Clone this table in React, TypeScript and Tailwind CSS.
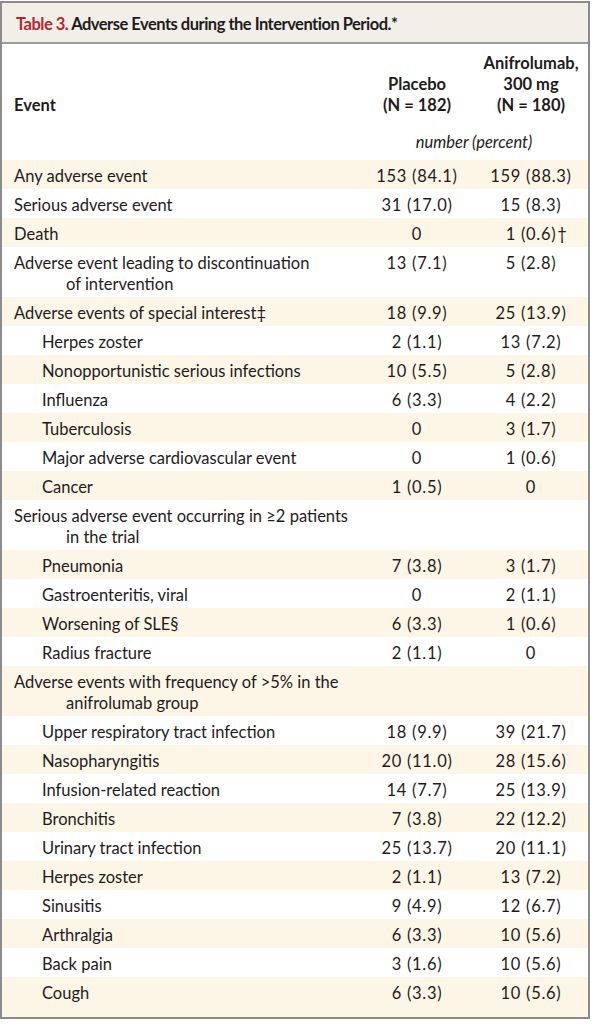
import React from 'react';

type Row = {
  label: string[];
  a?: string;
  b?: string;
  sub?: boolean;
  markA?: string;
  markB?: string;
};

const rows: Row[] = [
  { label: ['Any adverse event'], a: '153 (84.1)', b: '159 (88.3)' },
  { label: ['Serious adverse event'], a: '31 (17.0)', b: '15 (8.3)' },
  { label: ['Death'], a: '0', b: '1 (0.6)', markB: '†' },
  { label: ['Adverse event leading to discontinuation', 'of intervention'], a: '13 (7.1)', b: '5 (2.8)' },
  { label: ['Adverse events of special interest‡'], a: '18 (9.9)', b: '25 (13.9)' },
  { label: ['Herpes zoster'], a: '2 (1.1)', b: '13 (7.2)', sub: true },
  { label: ['Nonopportunistic serious infections'], a: '10 (5.5)', b: '5 (2.8)', sub: true },
  { label: ['Influenza'], a: '6 (3.3)', b: '4 (2.2)', sub: true },
  { label: ['Tuberculosis'], a: '0', b: '3 (1.7)', sub: true },
  { label: ['Major adverse cardiovascular event'], a: '0', b: '1 (0.6)', sub: true },
  { label: ['Cancer'], a: '1 (0.5)', b: '0', sub: true },
  { label: ['Serious adverse event occurring in ≥2 patients', 'in the trial'] },
  { label: ['Pneumonia'], a: '7 (3.8)', b: '3 (1.7)', sub: true },
  { label: ['Gastroenteritis, viral'], a: '0', b: '2 (1.1)', sub: true },
  { label: ['Worsening of SLE§'], a: '6 (3.3)', b: '1 (0.6)', sub: true },
  { label: ['Radius fracture'], a: '2 (1.1)', b: '0', sub: true },
  { label: ['Adverse events with frequency of >5% in the', 'anifrolumab group'] },
  { label: ['Upper respiratory tract infection'], a: '18 (9.9)', b: '39 (21.7)', sub: true },
  { label: ['Nasopharyngitis'], a: '20 (11.0)', b: '28 (15.6)', sub: true },
  { label: ['Infusion-related reaction'], a: '14 (7.7)', b: '25 (13.9)', sub: true },
  { label: ['Bronchitis'], a: '7 (3.8)', b: '22 (12.2)', sub: true },
  { label: ['Urinary tract infection'], a: '25 (13.7)', b: '20 (11.1)', sub: true },
  { label: ['Herpes zoster'], a: '2 (1.1)', b: '13 (7.2)', sub: true },
  { label: ['Sinusitis'], a: '9 (4.9)', b: '12 (6.7)', sub: true },
  { label: ['Arthralgia'], a: '6 (3.3)', b: '10 (5.6)', sub: true },
  { label: ['Back pain'], a: '3 (1.6)', b: '10 (5.6)', sub: true },
  { label: ['Cough'], a: '6 (3.3)', b: '10 (5.6)', sub: true },
];

function Cell({ v, mark }: { v?: string; mark?: string }) {
  return (
    <div className="w-[114px] text-center tracking-[0.7px]">
      {v && (
        <span className="relative">
          {v}
          {mark && <span className="absolute left-full top-0 pl-[1px]">{mark}</span>}
        </span>
      )}
    </div>
  );
}

export default function App() {
  return (
    <div className="bg-white w-[603px] h-[1024px] pt-[1px]" style={{ fontFamily: 'Lato, "Open Sans", sans-serif' }}>
      <div className="w-[590px] border-2 border-[#8b8b8b] text-[#1f1b1c]">
        <div className="h-[41px] bg-[#f2eee8] border-b-2 border-[#9d9d9d] pl-[14px] pt-[11px] text-[16.5px] font-bold leading-[21px] tracking-[-0.5px]">
          <span className="text-[#b5282f]">Table 3.</span> Adverse Events during the Intervention Period.*
        </div>
        <div className="pt-[9px] pb-[7px] text-[16.5px] leading-[21px]">
          <div className="flex items-end font-bold">
            <div className="flex-1 pl-3">Event</div>
            <div className="w-[114px] text-center">
              <div>Placebo</div>
              <div>(N = 182)</div>
            </div>
            <div className="w-[114px] text-center">
              <div>Anifrolumab,</div>
              <div>300 mg</div>
              <div>(N = 180)</div>
            </div>
          </div>
          <div className="flex mt-[16px]">
            <div className="flex-1" />
            <div className="w-[228px] text-center italic">number (percent)</div>
          </div>
        </div>
        <div className="text-[16.5px] leading-[21px]">
          {rows.map((r, i) => (
            <div
              key={i}
              className={`flex pt-[6px] ${i % 2 === 0 ? 'bg-[#fdf5e6]' : 'bg-white'} ${i === rows.length - 1 ? 'pb-[13px]' : 'pb-[2px]'}`}
            >
              <div className={`flex-1 ${r.sub ? 'pl-[40px]' : 'pl-3'}`}>
                <div>{r.label[0]}</div>
                {r.label[1] && <div className="pl-[52px]">{r.label[1]}</div>}
              </div>
              <Cell v={r.a} mark={r.markA} />
              <Cell v={r.b} mark={r.markB} />
            </div>
          ))}
        </div>
      </div>
    </div>
  );
}
